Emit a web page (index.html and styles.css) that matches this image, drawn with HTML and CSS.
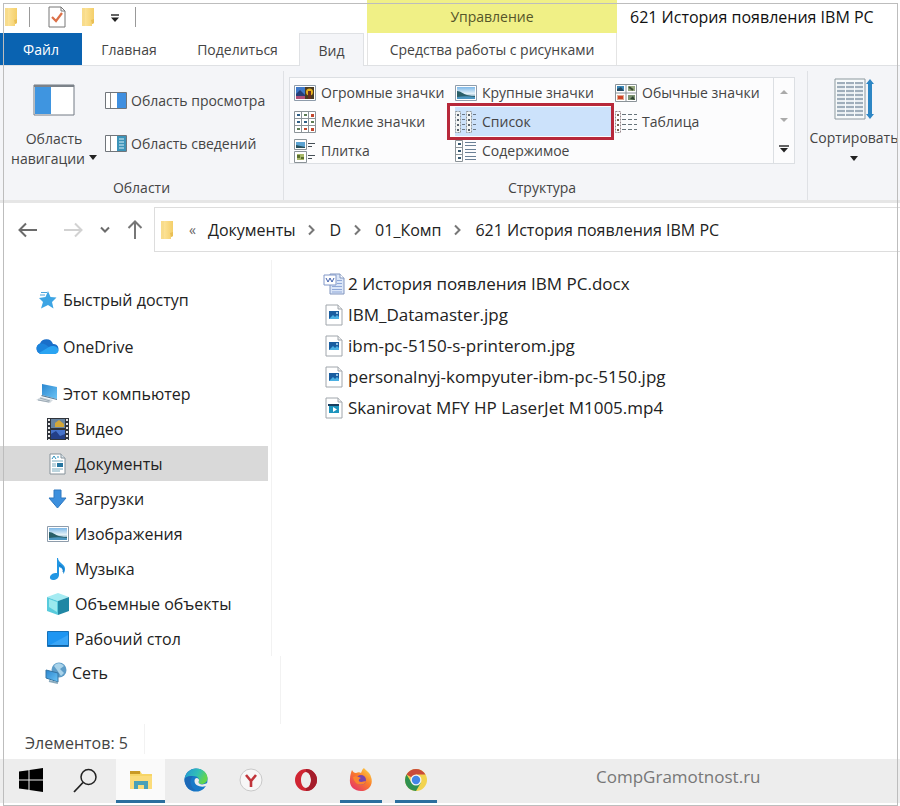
FILE: index.html
```html
<!DOCTYPE html>
<html lang="ru">
<head>
<meta charset="utf-8">
<title>621 История появления IBM PC</title>
<link rel="stylesheet" href="styles.css">
</head>
<body>
<svg class="defs" aria-hidden="true">
  <defs>
    <linearGradient id="gold" x1="0" x2="1"><stop offset="0" stop-color="#ffe9a6"/><stop offset="1" stop-color="#f4cf6a"/></linearGradient>
    <linearGradient id="sky" x1="0" y1="0" x2="0" y2="1"><stop offset="0" stop-color="#7db8e8"/><stop offset=".55" stop-color="#e4f1f8"/><stop offset="1" stop-color="#2e6d92"/></linearGradient>
    <linearGradient id="screen" x1="0" y1="0" x2="1" y2="1"><stop offset="0" stop-color="#2b86cf"/><stop offset="1" stop-color="#6cc4f5"/></linearGradient>
    <symbol id="folder" viewBox="0 0 14 20"><path d="M1 1h12v15l-2 1v2H1z" fill="url(#gold)"/><path d="M1 1h3v18H1z" fill="#f8dc8c"/><path d="M10 13l3-1v4l-2 1z" fill="#e9bf55"/></symbol>
    <symbol id="photo" viewBox="0 0 22 16"><path d="M.5.5h21v15H.5z" fill="#fff" stroke="#8e9cab"/><path d="M2 2h18v12H2z" fill="url(#sky)"/><path d="M2 6c4 0 6 3 10 4s6 1 8 1v3H2z" fill="#2a5f68"/><path d="M2 12c6-1 12-1 18 0v2H2z" fill="#4a94bf"/></symbol>
    <symbol id="jpg" viewBox="0 0 18 22"><path d="M1 1h12l4 4v16H1z" fill="#fff" stroke="#a0a6ac"/><path d="M13 1v4h4" fill="#eee" stroke="#a0a6ac"/><path d="M4 7h10v8H4z" fill="#195da0"/><path d="M4 15l4-4 2 2 2-2 2 2v2z" fill="#4bb0e3"/><circle cx="12" cy="9" r="1" fill="#bde3fa"/></symbol>
    <symbol id="chev" viewBox="0 0 10 12"><path d="M2 1.500l4.500 4.500L2 10.500" fill="none" stroke="#777" stroke-width="2"/></symbol>
  </defs>
</svg>

<div class="window">
  <header class="titlebar">
    <div class="quick">
      <svg width="14" height="20"><use href="#folder"/></svg>
      <span class="bar"></span>
      <button aria-label="Свойства"><svg width="18" height="22" viewBox="0 0 18 22"><path d="M1 1h12l4 4v16H1z" fill="#fff" stroke="#777"/><path d="M13 1v4h4" fill="none" stroke="#777"/><path d="M4 11l4 4 6-8" fill="none" stroke="#dc7048" stroke-width="2.2"/></svg></button>
      <button aria-label="Новая папка"><svg width="14" height="20"><use href="#folder"/></svg></button>
      <button aria-label="Настройка панели"><svg width="10" height="10" viewBox="0 0 10 10"><path d="M1 3h8" stroke="#222" stroke-width="1.4"/><path d="M1 5.500h8L5 10z" fill="#222"/></svg></button>
      <span class="bar"></span>
    </div>
    <div class="context">Управление</div>
    <h1>621 История появления IBM PC</h1>
  </header>

  <nav class="tabs">
    <button class="tab file">Файл</button>
    <button class="tab home">Главная</button>
    <button class="tab share">Поделиться</button>
    <button class="tab view">Вид</button>
    <button class="tab tools">Средства работы с рисунками</button>
  </nav>

  <section class="ribbon">
    <div class="group panes">
      <div class="group-body">
        <button class="big">
          <svg width="42" height="32" viewBox="0 0 42 32"><path d="M1 1h40v30H1z" fill="#fff" stroke="#727a84"/><path d="M1 1h40v2H1z" fill="#7c8289"/><path d="M2 3h16v27H2z" fill="#3f95e0"/></svg>
          <span>Область<br>навигации<svg class="drop" width="8" height="5" viewBox="0 0 8 5"><path d="M0 0h8L4 5z" fill="#222"/></svg></span>
        </button>
        <div class="stack">
          <button><svg width="22" height="18" viewBox="0 0 22 18"><path d="M.5.5h21v16H.5z" fill="#fff" stroke="#70757b"/><path d="M5.500 1v15" stroke="#888"/><path d="M12 1h9v15h-9z" fill="#3f8fe0"/></svg>Область просмотра</button>
          <button><svg width="22" height="18" viewBox="0 0 22 18"><path d="M.5.5h21v16H.5z" fill="#fff" stroke="#70757b"/><path d="M5.500 1v15" stroke="#888"/><path d="M12 1h9v15h-9z" fill="#3c93b8"/><path d="M14 4h5M14 7h5M14 10h5M14 13h5" stroke="#d9f1fa"/></svg>Область сведений</button>
        </div>
      </div>
      <h2>Области</h2>
    </div>

    <div class="group layout">
      <div class="gallery">
        <div class="options">
          <button><svg width="22" height="16" viewBox="0 0 22 16"><path d="M.5.5h21v15H.5z" fill="#fff" stroke="#8e9cab"/><path d="M2 2h18v12H2z" fill="#4079c8"/><path d="M2 9l4-4 5 5v4H2z" fill="#263f78"/><path d="M2 11h9v3H2z" fill="#b04f78"/><path d="M11 2h9v12h-9z" fill="#4a3b22"/><circle cx="15.500" cy="7" r="3.500" fill="#e7b21e"/><path d="M14 6h3v8h-3z" fill="#6a2f22"/></svg>Огромные значки</button>
          <button><svg width="22" height="16"><use href="#photo"/></svg>Крупные значки</button>
          <button><svg width="22" height="18" viewBox="0 0 22 18"><path d="M.5.5h21v17H.5zM11 0v18M0 9h22" fill="#fff" stroke="#8b9398"/><path d="M2 2h7v5H2z" fill="#3a87b8"/><path d="M13 2h7v5h-7z" fill="#93a57c"/><path d="M2 11h7v5H2z" fill="#e3a68c"/><path d="M13 11h7v5h-7z" fill="#7d9472"/><path d="M2 5l4-2 3 4H2z" fill="#254b63"/><path d="M14 3l4 3" stroke="#3c4c35" stroke-width="2"/><path d="M3 12h5v3H3z" fill="#cf4527"/><path d="M15 15l3-3 2 4z" fill="#2e4431"/></svg>Обычные значки</button>
          <button><svg width="22" height="22" viewBox="0 0 22 22"><path d="M.5.5h21v21H.5zM7.500 0v22M14.500 0v22M0 7.500h22M0 14.500h22" fill="#fff" stroke="#8b9398"/><path d="M3 3h3v2H3zM3 10h3v2H3zM10 10h3v2h-3z" fill="#2f5e86"/><path d="M10 3h3v2h-3zM17 10h3v2h-3zM3 17h3v2H3z" fill="#5d7d55"/><path d="M17 3h3v3h-3zM10 17h3v2h-3zM17 17h3v3h-3z" fill="#c3472e"/></svg>Мелкие значки</button>
          <button class="chosen"><svg width="22" height="22" viewBox="0 0 22 22"><path d="M.5.500h5v21h-5zM11.500.500h5v21h-5z" fill="#f4f6f5" stroke="#90979b" stroke-dasharray="2 1"/><path d="M3 3v17M14 3v17" stroke="#56616c" stroke-width="2" stroke-dasharray="2 3"/><path d="M8.500 3v17M19.500 3v17" stroke="#6b7886" stroke-width="3" stroke-dasharray="1 4"/></svg>Список</button>
          <button><svg width="22" height="22" viewBox="0 0 22 22"><path d="M.5.500h5v21h-5z" fill="#fff" stroke="#99888c" stroke-dasharray="2 1"/><path d="M3 3v17" stroke="#765" stroke-width="2" stroke-dasharray="2 3"/><path d="M7 3.500h4M13 3.500h4M19 3.500h3M7 8.500h4M13 8.500h4M19 8.500h3M7 13.500h4M13 13.500h4M19 13.500h3M7 18.500h4M13 18.500h4M19 18.500h3" stroke="#67737a"/></svg>Таблица</button>
          <button><svg width="22" height="24" viewBox="0 0 22 24"><path d="M.5.500h12v10H.5zM.5 12.500h12v11H.5z" fill="#fff" stroke="#8b9398"/><path d="M2 3h9v6H2z" fill="#5ca3d2"/><path d="M2 6l9 2v1H2z" fill="#264f5c"/><path d="M3 15h7v6H3z" fill="#a9b96a"/><path d="M3 16h3v3H3zM7 18h3v2H7z" fill="#5b6f2c"/><path d="M14 4.500h7M14 7.500h4M14 16.500h7M14 19.500h4" stroke="#454e56"/></svg>Плитка</button>
          <button><svg width="22" height="22" viewBox="0 0 22 22"><path d="M.5.500h7v21h-7zM0 7.500h8M0 14.500h8" fill="#fff" stroke="#8b9398"/><path d="M3 3h3v2H3zM3 10h3v2H3zM3 17h3v2H3z" fill="#35566e"/><path d="M10 2.500h11M10 5.500h11M10 9.500h11M10 12.500h11M10 16.500h11M10 19.500h11" stroke="#6a7f95"/></svg>Содержимое</button>
        </div>
        <div class="scroller">
          <button aria-label="Вверх"><svg width="8" height="4" viewBox="0 0 8 4"><path d="M0 4h8L4 0z" fill="#aaa"/></svg></button>
          <button aria-label="Вниз"><svg width="8" height="4" viewBox="0 0 8 4"><path d="M0 0h8L4 4z" fill="#aaa"/></svg></button>
          <button aria-label="Ещё"><svg width="10" height="8" viewBox="0 0 10 8"><path d="M0 1h10" stroke="#222" stroke-width="1.400"/><path d="M1 3h8L5 7.500z" fill="#222"/></svg></button>
        </div>
      </div>
      <h2>Структура</h2>
    </div>

    <div class="group sort">
      <button class="big">
        <svg width="40" height="42" viewBox="0 0 40 42"><path d="M1 1h30v40H1z" fill="#f7fafb" stroke="#8d999f"/><path d="M3 5h26M3 9h26M3 13h26M3 17h26M3 21h26M3 25h26M3 29h26M3 33h26M3 37h26" stroke="#8295a6" stroke-width="1.500" stroke-dasharray="8 1"/><path d="M3 7h26M3 11h26M3 15h26M3 19h26M3 23h26M3 27h26M3 31h26M3 35h26" stroke="#dbe3e9" stroke-dasharray="8 1"/><path d="M36 1l4 5h-2v30h2l-4 5-4-5h2V6h-2z" fill="#2d86c4"/></svg>
        <span>Сортировать</span>
        <svg width="8" height="5" viewBox="0 0 8 5"><path d="M0 0h8L4 5z" fill="#222"/></svg>
      </button>
    </div>
  </section>

  <div class="address">
    <div class="arrows">
      <button aria-label="Назад"><svg width="20" height="16" viewBox="0 0 20 16"><path d="M19 8H2M8 1.500L1.500 8 8 14.500" fill="none" stroke="#6b6b6b" stroke-width="2"/></svg></button>
      <button aria-label="Вперёд"><svg width="20" height="16" viewBox="0 0 20 16"><path d="M1 8h17M12 1.500L18.500 8 12 14.500" fill="none" stroke="#d2d2d2" stroke-width="2"/></svg></button>
      <button aria-label="Последние"><svg width="10" height="8" viewBox="0 0 10 8"><path d="M1 1.500l4 4 4-4" fill="none" stroke="#6b6b6b" stroke-width="2"/></svg></button>
      <button aria-label="Наверх"><svg width="16" height="20" viewBox="0 0 16 20"><path d="M8 19V2M1.500 8L8 1.500 14.500 8" fill="none" stroke="#777" stroke-width="2"/></svg></button>
    </div>
    <div class="crumbs">
      <svg width="14" height="20"><use href="#folder"/></svg>
      <span class="more">«</span>
      <a href="#">Документы</a><svg width="10" height="12"><use href="#chev"/></svg>
      <a href="#">D</a><svg width="10" height="12"><use href="#chev"/></svg>
      <a href="#">01_Комп</a><svg width="10" height="12"><use href="#chev"/></svg>
      <a href="#">621 История появления IBM PC</a>
    </div>
  </div>

  <main class="content">
    <nav class="tree">
      <div class="upper">
        <a class="root" href="#"><svg width="22" height="20" viewBox="0 0 22 20"><path d="M12 1l2.500 6 6 .500-4.500 4.500 1.500 6.500-5.500-3.500L5 18.500l2-6.500-4-4 6.500-1z" fill="#3da5e4"/><path d="M5 2.500h6M4 5h5" stroke="#4ba4dc"/></svg>Быстрый доступ</a>
        <a class="root" href="#"><svg class="cloud" width="24" height="16" viewBox="0 0 24 16"><path d="M6 15a5.500 5.500 0 0 1-1-10.500A7 7 0 0 1 18 5a5 5 0 0 1 1 10z" fill="#1a6fc9"/><path d="M5 4.500C9 4 12 6 15 9l-9 6A5.500 5.500 0 0 1 5 4.500z" fill="#1c84dc"/><path d="M4 14l10-6c3-2 9-1 9.500 3.500 0 2-2 3.500-4 3.500H6z" fill="#2aa4f2"/></svg>OneDrive</a>
        <a class="root" href="#"><svg width="22" height="20" viewBox="0 0 22 20"><path d="M6 0l15 3v12L6 11z" fill="url(#screen)"/><path d="M6 11l15 4v1L5 12z" fill="#587c98"/><path d="M5 13l12 3-3 3-14-3z" fill="#d5dce1"/><path d="M4 14l10 3M2 16l11 2" stroke="#9caab5"/></svg>Этот компьютер</a>
        <a class="leaf" href="#"><svg width="22" height="22" viewBox="0 0 22 22"><path d="M0 0h22v22H0z" fill="#30343b"/><path d="M4 1h14v9H4z" fill="#6884a0"/><path d="M4 12h14v9H4z" fill="#4673cb"/><path d="M8 5l4-3 5 4v3H8z" fill="#d2a739"/><path d="M4 16l5-3 4 5 5-2v5H4z" fill="#233f87"/><path d="M2 1v21M20 1v21" stroke="#e8e8e8" stroke-width="2" stroke-dasharray="2 2"/></svg>Видео</a>
        <a class="leaf selected" href="#"><svg width="22" height="22" viewBox="0 0 22 22"><path d="M3 1h11l4 4v16H3z" fill="#fff" stroke="#87939b"/><path d="M14 1v4h4" fill="#dce6ec" stroke="#87939b"/><path d="M5 6l2-3 2 3M10 4h2" fill="none" stroke="#2e91bd"/><path d="M5 8h11M5 11h4M5 13h4M5 16h11M5 18h8" stroke="#78aabd"/><path d="M10 10h6v4h-6z" fill="#2776a0"/></svg>Документы</a>
        <a class="leaf" href="#"><svg width="22" height="20" viewBox="0 0 22 20"><path d="M7 1h7v8h5l-8.500 10L2 9h5z" fill="#3c8fdd" stroke="#2e78c0"/></svg>Загрузки</a>
        <a class="leaf" href="#"><svg width="22" height="16"><use href="#photo"/></svg>Изображения</a>
        <a class="leaf" href="#"><svg width="22" height="22" viewBox="0 0 22 22"><path d="M11 0c0 5 8 6 7 12-.3 2-1 3-2 4 1-4-1-6-4-7v8c0 3-3 5-6 5s-4-3-2-5 4-2 6-2V0z" fill="#2196e3"/><path d="M12 7c3 1 5 3 4 7" fill="none" stroke="#1670ba"/></svg>Музыка</a>
        <a class="leaf" href="#"><svg width="22" height="22" viewBox="0 0 22 22"><path d="M0 4l11-4 11 4-11 4z" fill="#a5ebf2"/><path d="M0 4l11 4v14L0 18z" fill="#58cbdc"/><path d="M22 4L11 8v14l11-4z" fill="#2087a4"/><path d="M2 6l8 3v10l-8-5z" fill="#9be9ee"/></svg>Объемные объекты</a>
        <a class="leaf" href="#"><svg width="22" height="16" viewBox="0 0 22 16"><path d="M.5.500h21v15H.5z" fill="#1e96f2" stroke="#1671b8"/><path d="M1 15L21 4v11z" fill="#3aa6f7"/><path d="M1 14.500h20" stroke="#115f9f"/></svg>Рабочий стол</a>
      </div>
      <div class="lower">
        <a class="net" href="#"><svg width="22" height="22" viewBox="0 0 22 22"><circle cx="14" cy="8" r="7.500" fill="#5d9cc7"/><path d="M9 4c3-4 7-3 10 0l-4 3 4 4-3 3-4-6z" fill="#a9d3ea"/><path d="M1 8l12 3v9L1 16z" fill="url(#screen)" stroke="#3474a4"/><path d="M4 19l9 2" stroke="#8aaabd" stroke-width="2"/></svg>Сеть</a>
      </div>
    </nav>
    <ul class="files">
      <li><a href="#"><svg width="22" height="22" viewBox="0 0 22 22"><path d="M7 1h10l4 4v16H7z" fill="#dbe6f8" stroke="#8296bf"/><path d="M17 1v4h4" fill="#fff" stroke="#8296bf"/><path d="M9 13.500h10M9 16.500h10M9 19h10M14 7.500h5M14 10.500h5" stroke="#90a8d8"/><path d="M1 2h12v10H1z" fill="#fff" stroke="#8298c8"/><path d="M3 5l2 4 2-4 2 4 2-4" fill="none" stroke="#4160ac"/></svg>2 История появления IBM PC.docx</a></li>
      <li><a href="#"><svg width="22" height="22"><use href="#jpg"/></svg>IBM_Datamaster.jpg</a></li>
      <li><a href="#"><svg width="22" height="22"><use href="#jpg"/></svg>ibm-pc-5150-s-printerom.jpg</a></li>
      <li><a href="#"><svg width="22" height="22"><use href="#jpg"/></svg>personalnyj-kompyuter-ibm-pc-5150.jpg</a></li>
      <li><a href="#"><svg width="22" height="22" viewBox="-2 0 22 22"><path d="M1 1h12l4 4v16H1z" fill="#fff" stroke="#a0a6ac"/><path d="M13 1v4h4" fill="#eee" stroke="#a0a6ac"/><path d="M3 7h11v2H3z" fill="#173f60"/><path d="M4 9h10v7H4z" fill="#1d94bd"/><path d="M8 10l4 2.500L8 15z" fill="#fff"/></svg>Skanirovat MFY HP LaserJet M1005.mp4</a></li>
    </ul>
  </main>

  <div class="status"><span>Элементов: 5</span></div>

  <footer class="taskbar">
    <button aria-label="Пуск"><svg width="24" height="24" viewBox="0 0 24 24"><path d="M0 3.500l9.500-1.300v9.300H0zM10.500 2L24 0v11.500H10.500zM0 12.500h9.500v9.300L0 20.500zM10.500 12.500H24V24l-13.500-2z" fill="#000"/></svg></button>
    <button aria-label="Поиск"><svg width="26" height="26" viewBox="0 0 26 26"><circle cx="15.500" cy="10" r="7.500" fill="none" stroke="#222" stroke-width="1.500"/><path d="M10 15.500L1 25" stroke="#222" stroke-width="1.800"/></svg></button>
    <button class="active" aria-label="Проводник"><svg width="24" height="20" viewBox="0 0 24 20"><path d="M1 1h10l2 3h10v15H1z" fill="#f7d566"/><path d="M1 1h10v3H1z" fill="#c99a26"/><path d="M1 6h22v13H1z" fill="#fbdc7b"/><path d="M5 19v-8h14v8h-4v-4H9v4z" fill="#49a0b8"/></svg></button>
    <button aria-label="Edge"><svg width="24" height="24" viewBox="0 0 24 24"><defs><linearGradient id="edge" x1="0" y1="0" x2="1" y2=".4"><stop offset="0" stop-color="#2294d8"/><stop offset=".6" stop-color="#32bfb5"/><stop offset="1" stop-color="#63d64b"/></linearGradient></defs><circle cx="12" cy="12" r="11.500" fill="#1778c8"/><path d="M.5 11C2 4 7 .5 12 .5c7 0 11.500 5 11.500 9.500 0 4-3 6-6 6s-4-1-3-2c2-3-1-6-5-6-4 0-8 1-9 3z" fill="url(#edge)"/><path d="M9 8.500c-4 3-3 11 3 14C5 23 .5 18 .5 11 3 8 6 7.500 9 8.500z" fill="#1c69b7"/><path d="M13 10c3 1 2 3 1.500 4 0 3 5 3 9 1v2c-3 3-13 2-13-4 0-2 1-3 2.500-3z" fill="#ededed"/></svg></button>
    <button aria-label="Yandex"><svg width="24" height="24" viewBox="0 0 24 24"><circle cx="12" cy="12" r="11" fill="#f7f7f7" stroke="#c9c9c9"/><path d="M7 7l5 6 5-6M12 12v7" fill="none" stroke="#c1353b" stroke-width="2.600"/></svg></button>
    <button aria-label="Opera"><svg width="24" height="24" viewBox="0 0 24 24"><path fill-rule="evenodd" d="M12 1a11 11 0 1 0 0 22 11 11 0 0 0 0-22zm0 3c3 0 5 4 5 8s-2 8-5 8-5-4-5-8 2-8 5-8z" fill="#d02532"/><path d="M12 1a11 11 0 0 1 0 22v-3c3 0 5-4 5-8s-2-8-5-8z" fill="#a51d2b"/></svg></button>
    <button class="running" aria-label="Firefox"><svg width="24" height="24" viewBox="0 0 24 24"><defs><linearGradient id="fox" x1="1" y1="0" x2=".2" y2="1"><stop offset="0" stop-color="#ffe14a"/><stop offset=".5" stop-color="#fa7c2b"/><stop offset="1" stop-color="#e53469"/></linearGradient></defs><path d="M3 2c1 2 2 3 4 3 2-1 4-1 5 0 1-2 1-4 3-5 1 2 6 4 7 9 3 8-3 14-10 14S0 18 1 11c0-4 1-6 2-9z" fill="url(#fox)"/><circle cx="12" cy="12" r="5" fill="#7845ad"/><path d="M4 9c3-2 6 0 8 1-3 1-3 4 0 4 2 0 3-1 5-1-1 5-11 6-13-4z" fill="#fa8530"/></svg></button>
    <button class="running" aria-label="Chrome"><svg width="24" height="24" viewBox="0 0 24 24"><circle cx="12" cy="12" r="11" fill="#f2d34f"/><path d="M12 12L2.500 6.500A11 11 0 0 1 21.500 6.500H12z" fill="#c94b3b"/><path d="M2.500 6.500A11 11 0 0 0 12 23l5-8.500-9.500 0z" fill="#2f9150"/><circle cx="12" cy="12" r="5.500" fill="#f4f4f4"/><circle cx="12" cy="12" r="4.200" fill="#4386e6"/></svg></button>
    <span class="credit">CompGramotnost.ru</span>
  </footer>
</div>
</body>
</html>
```
FILE: styles.css
```css
* { box-sizing: border-box; }

body {
  margin: 0;
  background: #fff;
  color: #222;
  font: 16px/20px "Open Sans", "Noto Sans", sans-serif;
  overflow-x: hidden;
}

svg { display: block; flex: none; }
.defs { position: absolute; width: 0; height: 0; }
a { color: inherit; text-decoration: none; }
h1, h2 { margin: 0; font-weight: 400; }

button {
  margin: 0;
  padding: 0;
  border: 0;
  background: none;
  color: inherit;
  font: inherit;
}

.window {
  position: relative;
  display: flex;
  flex-direction: column;
  min-height: 100vh;
}

/* Thin frame drawn over the window edges */
.window::after {
  content: "";
  position: absolute;
  inset: 3px 2px 0 3px;
  border: 1px solid #bdbdbd;
  pointer-events: none;
}

.titlebar { display: flex; height: 33px; }

.quick {
  display: flex;
  align-items: center;
  width: 367px;
  padding-left: 4px;
}
.quick .bar { width: 1px; height: 20px; background: #999; }
.quick > :nth-child(2) { margin: 0 18px 0 11px; }
.quick > :nth-child(4) { margin: 0 15px; }
.quick > :nth-child(6) { margin-left: 15px; }

.context {
  width: 250px;
  background: #f0f086;
  color: #55552a;
  font-size: 14px;
  line-height: 33px;
  text-align: center;
}

h1 {
  padding-left: 13px;
  color: #111;
  font-size: 16px;
  line-height: 34px;
  white-space: nowrap;
}

.tabs {
  display: flex;
  height: 33px;
  border-bottom: 1px solid #dfe1e4;
  color: #444;
  font-size: 14px;
}
.tab { padding-top: 2px; white-space: nowrap; }
.file { width: 82px; background: #0a63b1; color: #fff; }
.home { width: 94px; }
.share { width: 123px; }
.view {
  width: 65px;
  height: 33px;
  margin-right: 3px;
  border: 1px solid #dfe1e4;
  border-bottom: 0;
  background: #f4f5f8;
}
.tools { width: 250px; border: solid #e4e4e4; border-width: 0 1px; }

.ribbon {
  display: flex;
  height: 137px;
  padding-top: 5px;
  border-bottom: 3px solid #e6e6e6;
  background: #f4f5f8;
  color: #444;
}
.group { display: flex; flex-direction: column; padding-top: 6px; }
.group h2 { margin-top: auto; padding-bottom: 2px; font-size: 14px; text-align: center; }
.panes { width: 284px; border-right: 1px solid #dfe1e5; }
.group-body { display: flex; padding-left: 8px; }

.big {
  display: flex;
  flex-direction: column;
  align-items: center;
  gap: 13px;
  width: 92px;
  padding-top: 7px;
  font-size: 14px;
  white-space: nowrap;
}
.drop { display: inline-block; margin: 0 0 4px 4px; }
.stack { display: flex; flex-direction: column; gap: 23px; padding: 14px 0 0 5px; }
.stack button { display: flex; align-items: center; gap: 4px; font-size: 14px; white-space: nowrap; }

.layout { flex: 1; padding-left: 5px; border-right: 1px solid #dfe1e5; }
.layout h2 { padding-right: 12px; }
.gallery {
  display: flex;
  height: 87px;
  margin-right: 12px;
  border: 1px solid #dcdfe3;
  background: #fcfcfd;
}
.options {
  display: grid;
  flex: 1;
  grid-template-columns: 161px 160px 1fr;
  grid-auto-rows: 29px;
  padding-left: 4px;
}
.options button {
  display: flex;
  align-items: center;
  gap: 5px;
  font-size: 14px;
  white-space: nowrap;
}
.options .chosen { position: relative; margin-right: 4px; background: #cce2fb; }
.chosen::after {
  content: "";
  position: absolute;
  inset: -4px -3px -4px -8px;
  border: 3px solid #b7283a;
}
.scroller { display: flex; flex-direction: column; width: 21px; border-left: 1px solid #dcdfe3; }
.scroller button { display: grid; flex: 1; place-items: center; }

.sort { width: 92px; }
.sort .big { gap: 8px; padding-top: 1px; }

.address { display: flex; height: 49px; padding-top: 4px; }
.arrows { display: flex; align-items: center; width: 154px; padding-left: 18px; }
.arrows button + button { margin-left: 25px; }
.arrows button:nth-child(n + 3) { margin-left: 17px; }
.crumbs {
  display: flex;
  flex: 1;
  align-items: center;
  gap: 12px;
  padding-left: 5px;
  border: 1px solid #ddd;
  border-right: 0;
  white-space: nowrap;
}
.more { padding-left: 3px; color: #666; font-size: 14px; }

.content { display: flex; flex: 1; }
.tree { width: 292px; }
.upper {
  width: 272px;
  margin-top: 8px;
  padding-top: 22px;
  border-right: 1px solid #f2f2f2;
}
.lower { width: 281px; height: 68px; border-right: 1px solid #f2f2f2; }
.tree a { display: flex; align-items: center; gap: 6px; height: 35px; margin-right: 3px; }
.tree .root { gap: 5px; padding-left: 36px; }
.tree .root + .root { margin-top: 12px; }
.tree .leaf { padding-left: 47px; }
.tree .net { gap: 5px; height: 33px; padding-left: 45px; }
.tree .cloud { margin: 0 -1px; }
.tree .selected { background: #d9d9d9; }

.files { margin: 0; padding: 16px 0 0 31px; list-style: none; font-size: 17px; }
.files a { display: flex; align-items: center; gap: 3px; height: 31px; }

.status { display: flex; height: 35px; padding-left: 25px; color: #444; }
.status span { height: 30px; padding: 9px 16px 0 0; border-right: 1px solid #f2f2f2; }

.taskbar {
  display: flex;
  gap: 6px;
  height: 47px;
  padding: 0 0 3px 6px;
  background: linear-gradient(#ededed 44px, #fff 44px);
}
.taskbar button {
  display: grid;
  place-items: center;
  width: 49px;
  border-bottom: 3px solid transparent;
}
.taskbar .active { border-bottom-color: #2a6f9e; background: #fafafa; }
.taskbar .running { background: linear-gradient(#2a6f9e, #2a6f9e) center bottom / 42px 3px no-repeat border-box; }
.credit { margin-left: 150px; color: #777; font-size: 17px; line-height: 36px; }
```
